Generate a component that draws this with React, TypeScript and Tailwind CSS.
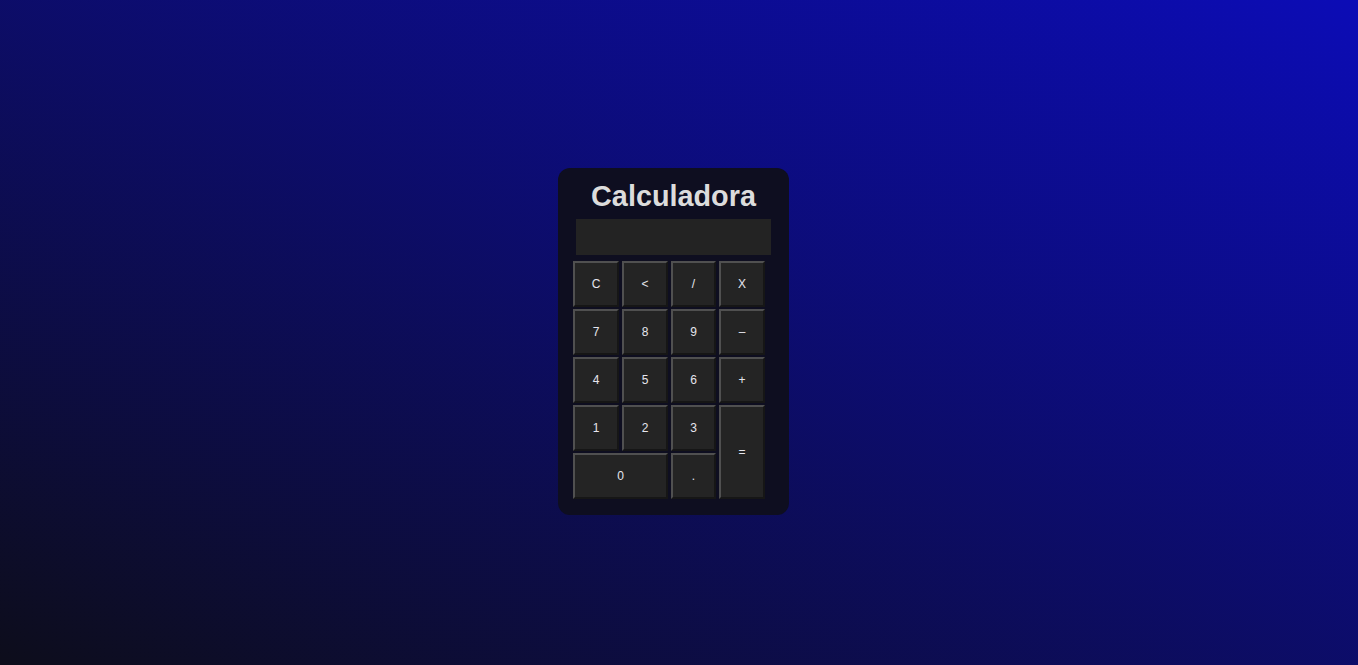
const KEYS = [
  { label: "C", cls: "" },
  { label: "<", cls: "" },
  { label: "/", cls: "" },
  { label: "X", cls: "" },
  { label: "7", cls: "" },
  { label: "8", cls: "" },
  { label: "9", cls: "" },
  { label: "–", cls: "" },
  { label: "4", cls: "" },
  { label: "5", cls: "" },
  { label: "6", cls: "" },
  { label: "+", cls: "" },
  { label: "1", cls: "" },
  { label: "2", cls: "" },
  { label: "3", cls: "" },
  { label: "=", cls: "row-span-2" },
  { label: "0", cls: "col-span-2" },
  { label: ".", cls: "" },
];

export default function App() {
  return (
    <div className="flex min-h-screen justify-center bg-[linear-gradient(to_top_right,#0d0d1b,#0c0cb6)] pt-[168px] font-['Liberation_Sans',Arial,sans-serif]">
      <div className="mr-[11px] h-[347px] w-[231px] rounded-[12px] bg-[#0e0e20] px-[15px] pt-[12px]">
        <h1 className="text-center text-[28.8px] font-bold leading-[33px] text-[#dcdcdc]">Calculadora</h1>
        <div className="ml-[3px] mt-[6px] h-[36px] w-[195px] bg-[#232323]" />
        <div className="mt-[6px] grid w-[192px] grid-cols-[46px_46px_45px_46px] grid-rows-[repeat(5,46px)] gap-x-[3px] gap-y-[2px]">
          {KEYS.map((k) => (
            <button
              key={k.label}
              className={`border-2 border-t-[#505050] border-l-[#505050] border-r-[#161616] border-b-[#161616] bg-[#242424] text-[12px] text-[#e6e6ee] ${k.cls}`}
            >
              {k.label}
            </button>
          ))}
        </div>
      </div>
    </div>
  );
}
